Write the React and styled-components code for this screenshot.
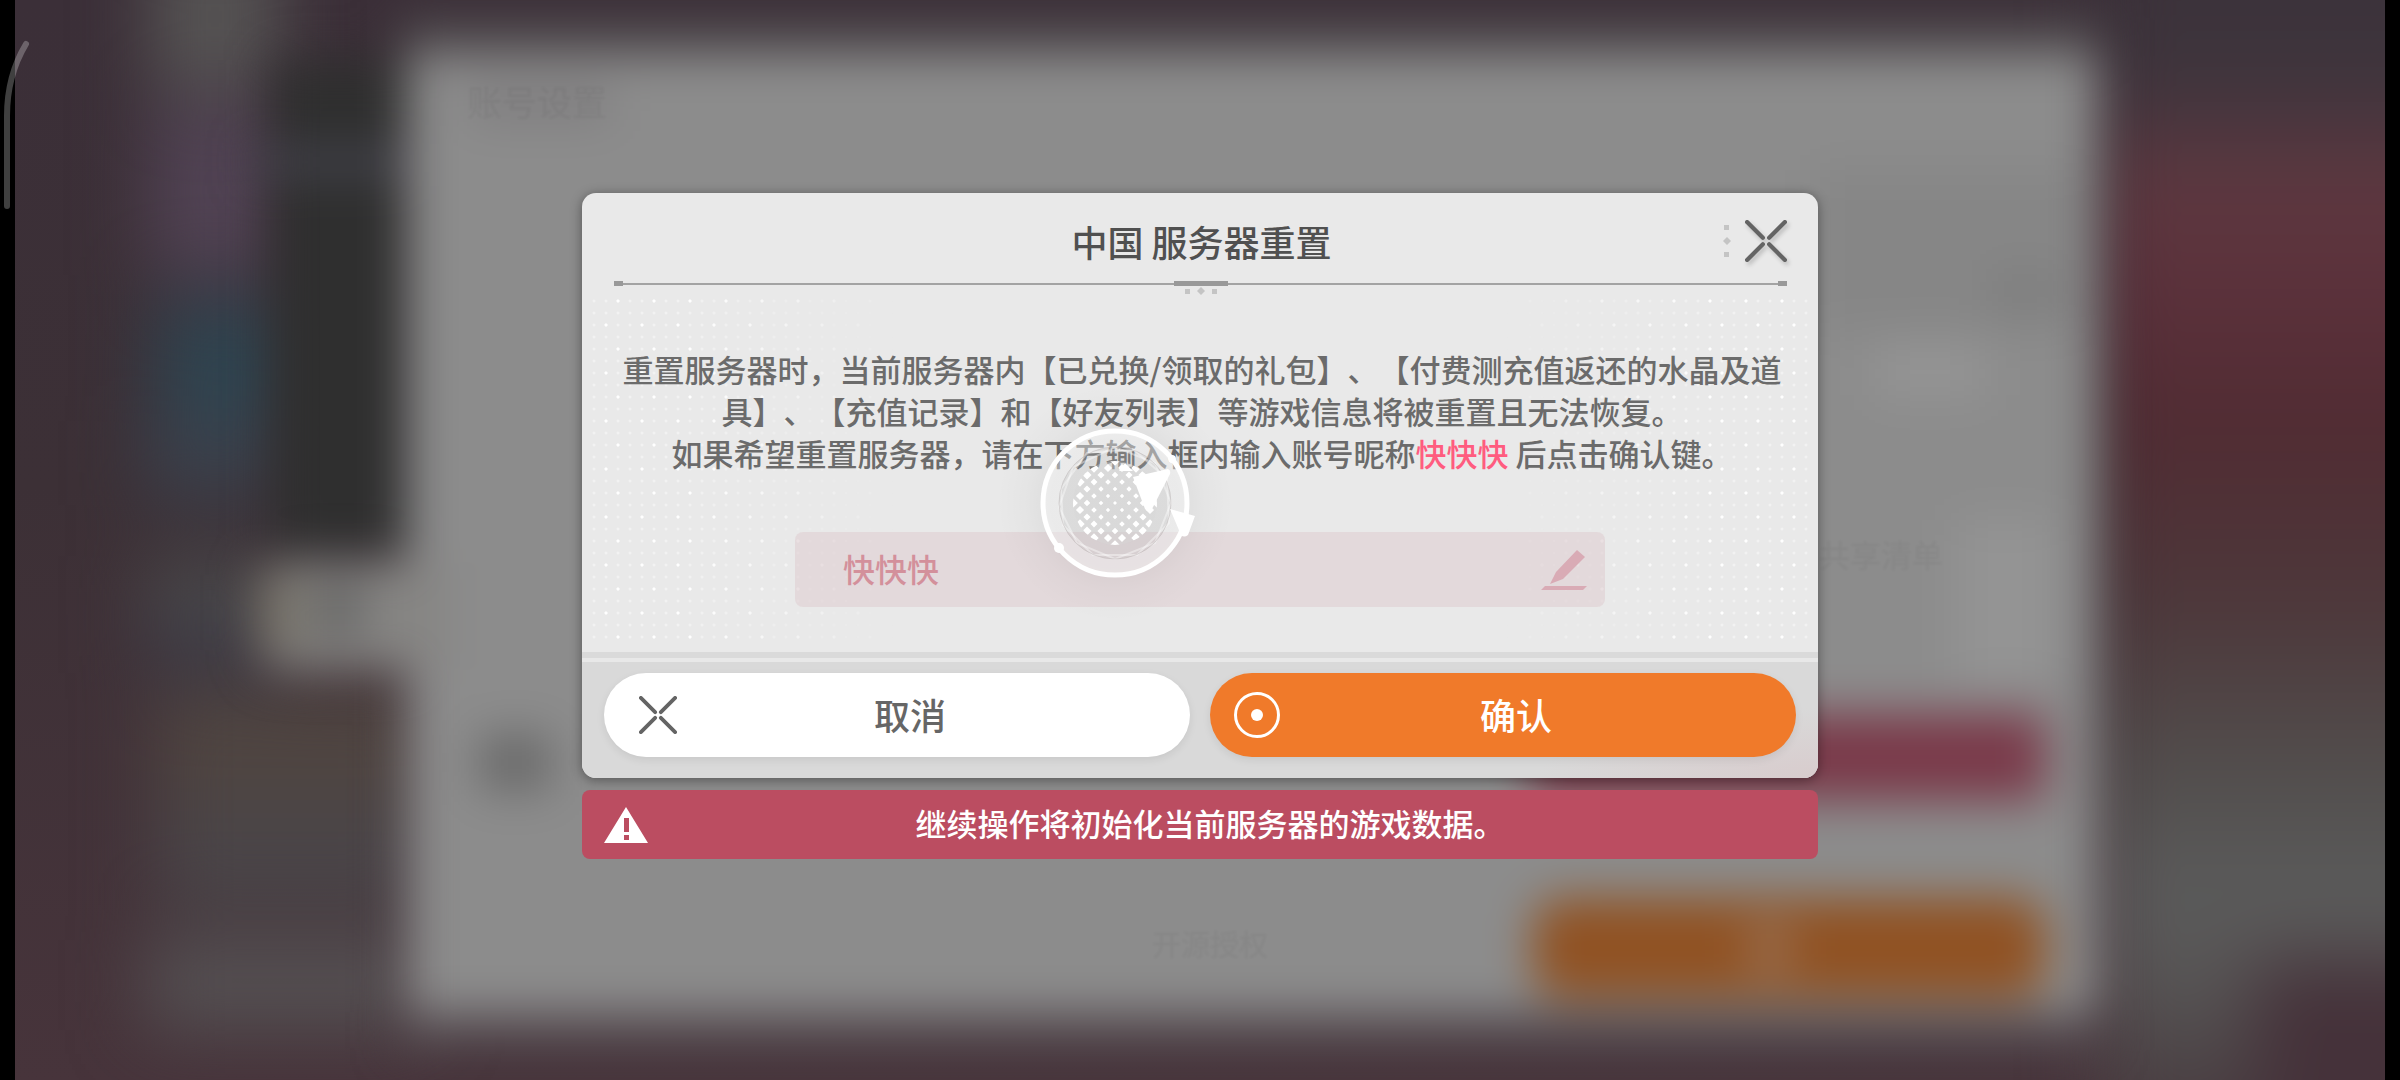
import React, { useState } from "react";
import styled, { createGlobalStyle } from "styled-components";

const GlobalStyle = createGlobalStyle`
  * {
    box-sizing: border-box;
  }

  body {
    margin: 0;
    background: #000;
    font-family: "Noto Sans CJK SC", sans-serif;
    text-spacing-trim: space-all;
  }
`;

const CrossIcon = ({ size, weight }) => (
  <svg width={size} height={size} viewBox="0 0 40 40" aria-hidden="true">
    <path
      d="M2 2 L17 17 M23 17 L38 2 M2 38 L17 23 M23 23 L38 38"
      fill="none"
      stroke="#646464"
      strokeWidth={weight}
      strokeLinecap="round"
    />
  </svg>
);

const TargetIcon = () => (
  <svg width="46" height="46" viewBox="0 0 46 46" aria-hidden="true">
    <circle cx="23" cy="23" r="21.5" fill="none" stroke="#fff" strokeWidth="3" />
    <circle cx="23" cy="23" r="6" fill="#fff" />
  </svg>
);

const PencilIcon = () => (
  <svg width="46" height="40" viewBox="0 0 46 40" aria-hidden="true">
    <path d="M36 0 L44 7 L22 29 L9 34 L15 22 Z" fill="#d9abb5" />
    <path d="M4 36 H46 L42 40 H0 Z" fill="#d9abb5" />
  </svg>
);

const WarningIcon = () => (
  <svg width="44" height="36" viewBox="0 0 44 36" aria-hidden="true">
    <path
      fillRule="evenodd"
      d="M22 0 L44 36 H0 Z M20 11 V25 H25 V11 Z M20 28 V33 H25 V28 Z"
      fill="#fff"
    />
  </svg>
);

// three little marks, used below the title and next to the close button
const Marks = ({ vertical }) => (
  <svg
    width={vertical ? 8 : 34}
    height={vertical ? 34 : 8}
    viewBox={vertical ? "0 0 8 34" : "0 0 34 8"}
    aria-hidden="true"
  >
    <g fill="#c4c4c4" transform={vertical ? "translate(8 0) rotate(90)" : undefined}>
      <rect x="1" y="2" width="5" height="5" />
      <path d="M17 0 L21 4 L17 8 L13 4 Z" />
      <rect x="28" y="2" width="5" height="5" />
    </g>
  </svg>
);

const Scene = () => (
  <SceneSvg viewBox="0 0 2370 1080" preserveAspectRatio="none" aria-hidden="true">
    <defs>
      <linearGradient id="base" x1="0" y1="0" x2="0" y2="1">
        <stop offset="0" stopColor="#3b2f38" />
        <stop offset="0.45" stopColor="#3c3036" />
        <stop offset="1" stopColor="#47343b" />
      </linearGradient>
      <linearGradient id="rightSide" x1="0" y1="0" x2="0" y2="1">
        <stop offset="0" stopColor="#3a3038" />
        <stop offset="0.14" stopColor="#3e353d" />
        <stop offset="0.22" stopColor="#5e3840" />
        <stop offset="0.31" stopColor="#5b313b" />
        <stop offset="0.41" stopColor="#512c33" />
        <stop offset="0.55" stopColor="#4d383b" />
        <stop offset="0.68" stopColor="#524e4d" />
        <stop offset="0.77" stopColor="#5b5b5b" />
        <stop offset="0.84" stopColor="#585656" />
        <stop offset="0.92" stopColor="#4b4245" />
        <stop offset="1" stopColor="#46343a" />
      </linearGradient>
      <filter
        id="soft"
        x="-50%"
        y="-50%"
        width="200%"
        height="200%"
        colorInterpolationFilters="sRGB"
      >
        <feGaussianBlur stdDeviation="23" />
      </filter>
      <filter
        id="wide"
        x="-50%"
        y="-50%"
        width="200%"
        height="200%"
        colorInterpolationFilters="sRGB"
      >
        <feGaussianBlur stdDeviation="36" />
      </filter>
      <filter id="faint" colorInterpolationFilters="sRGB">
        <feGaussianBlur stdDeviation="1" />
      </filter>
    </defs>
    <rect width="2370" height="1080" fill="url(#base)" />
    <g filter="url(#wide)">
      <rect x="2085" y="-100" width="420" height="1280" fill="url(#rightSide)" />
      <rect x="2240" y="960" width="240" height="220" fill="#45323a" />
      <rect x="135" y="-60" width="130" height="150" fill="#565454" />
      <rect x="135" y="105" width="130" height="170" fill="#514354" />
      <rect x="140" y="300" width="140" height="120" fill="#2f4450" />
      <rect x="130" y="420" width="140" height="80" fill="#3b414c" />
      <rect x="130" y="560" width="130" height="60" fill="#4a4b4c" />
      <rect x="130" y="625" width="130" height="50" fill="#3c3b47" />
      <rect x="140" y="690" width="270" height="110" fill="#4f4541" />
      <rect x="140" y="800" width="270" height="110" fill="#4a4548" />
      <rect x="130" y="940" width="280" height="90" fill="#555153" />
    </g>
    <g filter="url(#soft)">
      <rect x="258" y="60" width="132" height="490" fill="#2f2f2f" />
      <rect x="240" y="150" width="150" height="24" fill="#464650" />
      <rect x="385" y="18" width="1700" height="40" fill="#4d474b" />
      <rect x="385" y="1010" width="1700" height="40" fill="#544a4f" />
      <rect x="392" y="54" width="1691" height="960" rx="6" fill="#8c8c8c" />
      <rect x="250" y="562" width="180" height="108" rx="10" fill="#868583" />
      <rect x="240" y="575" width="50" height="75" fill="#77736a" />
      <rect x="305" y="585" width="40" height="50" fill="#606060" />
      <rect x="455" y="90" width="140" height="28" fill="#7b797b" />
      <rect x="465" y="735" width="70" height="55" fill="#686868" />
      <rect x="1800" y="170" width="265" height="160" fill="#868686" />
      <rect x="1980" y="275" width="60" height="35" fill="#7c7c7c" />
      <rect x="1860" y="345" width="110" height="50" fill="#959595" />
      <rect x="1940" y="520" width="100" height="160" fill="#949494" />
      <rect x="1515" y="714" width="515" height="86" rx="10" fill="#7a3a4a" />
      <rect x="1518" y="898" width="512" height="100" rx="30" fill="#905223" />
      <rect x="1735" y="925" width="40" height="46" fill="#9a7357" />
    </g>
    <g filter="url(#faint)" fill="#000" fillOpacity="0.04">
      <text x="452" y="116" fontSize="35">账号设置</text>
      <text x="1804" y="567" fontSize="31">共享清单</text>
      <text x="1137" y="956" fontSize="29">开源授权</text>
    </g>
  </SceneSvg>
);

// staggered diamonds that grow towards the rim of the disc
const meshPath = () => {
  const parts = [];
  for (let row = -6; row <= 6; row += 1) {
    for (let col = -6; col <= 6; col += 1) {
      const x = col * 7;
      const y = row * 7;
      const distance = Math.hypot(x, y);
      if ((row + col) % 2 === 0 && distance <= 43) {
        const r = 2 + (distance / 43) ** 2 * 3;
        parts.push(
          `M${120 + x} ${120 + y - r} l${r} ${r} l${-r} ${r} l${-r} ${-r} Z`
        );
      }
    }
  }
  return parts.join(" ");
};

const Spinner = () => (
  <SpinnerSvg viewBox="0 0 240 240" aria-hidden="true">
    <defs>
      <radialGradient id="halo">
        <stop offset="0.55" stopColor="#000" stopOpacity="0.05" />
        <stop offset="0.75" stopColor="#000" stopOpacity="0.02" />
        <stop offset="1" stopColor="#000" stopOpacity="0" />
      </radialGradient>
      <clipPath id="disc">
        <circle cx="120" cy="120" r="42" />
      </clipPath>
    </defs>
    <circle cx="120" cy="120" r="118" fill="url(#halo)" />
    <circle cx="120" cy="120" r="64" fill="none" stroke="#fff" strokeOpacity="0.4" strokeWidth="16" />
    <circle cx="120" cy="120" r="56" fill="#d8d8d8" fillOpacity="0.2" />
    <g fill="none" stroke="#fff" strokeOpacity="0.4" strokeWidth="2">
      <path d="M66 106 L92 70 L138 66 L172 96 L174 140 L142 172 L98 172 L68 142 Z" />
      <path d="M64 124 L78 84 L120 64 L160 80 L176 120 L160 160 L120 176 L82 160 Z" />
    </g>
    <circle cx="120" cy="120" r="56" fill="none" stroke="#bdb8b8" strokeOpacity="0.5" strokeWidth="1" />
    <circle cx="120" cy="120" r="42" fill="#d8d8d8" fillOpacity="0.35" />
    <path d={meshPath()} fill="#fff" clipPath="url(#disc)" />
    <circle cx="120" cy="120" r="72" fill="none" stroke="#fff" strokeWidth="5" />
    <circle cx="64" cy="165" r="5" fill="#fff" />
    <circle cx="177" cy="76" r="4" fill="#fff" />
    <path d="M124 88 L130 80 L138 88 Z" fill="#fff" />
    <path d="M138 94 L173 86 Q176 87 175 91 L157 126 Q153 130 150 126 Z" fill="#fff" />
    <path d="M175 126 L200 133 L193 152 Q189 155 186 152 Z" fill="#fff" />
  </SpinnerSvg>
);

export default function App() {
  const [nickname, setNickname] = useState("快快快");

  return (
    <>
      <GlobalStyle />
      <Screen>
        <Scene />
        <EdgeHandle viewBox="0 0 32 176" aria-hidden="true">
          <path
            d="M7 170 V80 C7 50 14 28 26 8"
            fill="none"
            stroke="#fff"
            strokeOpacity="0.25"
            strokeWidth="6"
            strokeLinecap="round"
          />
        </EdgeHandle>
        <Stack>
          <Dialog role="dialog" aria-labelledby="dialog-title">
            <Header>
              <Title id="dialog-title">中国 服务器重置</Title>
              <HeaderActions>
                <Marks vertical />
                <CloseButton type="button" aria-label="关闭">
                  <CrossIcon size={42} weight={4} />
                </CloseButton>
              </HeaderActions>
            </Header>
            <Rule>
              <RuleBar />
              <Marks />
            </Rule>
            <Body>
              <Message>
                重置服务器时，当前服务器内【已兑换/领取的礼包】、【付费测充值返还的水晶及道具】、【充值记录】和【好友列表】等游戏信息将被重置且无法恢复。
                <br />
                如果希望重置服务器，请在下方输入框内输入账号昵称<Name>快快快</Name> 后点击确认键。
              </Message>
              <Field>
                <Input
                  type="text"
                  aria-label="账号昵称"
                  value={nickname}
                  onChange={(e) => setNickname(e.target.value)}
                />
                <PencilIcon />
              </Field>
              <Spinner />
            </Body>
            <Footer>
              <Button type="button">
                <IconBox>
                  <CrossIcon size={38} weight={4} />
                </IconBox>
                <Label>取消</Label>
              </Button>
              <Button type="button" $primary>
                <IconBox>
                  <TargetIcon />
                </IconBox>
                <Label>确认</Label>
              </Button>
            </Footer>
          </Dialog>
          <Warning role="alert">
            <WarningIcon />
            <Label>继续操作将初始化当前服务器的游戏数据。</Label>
          </Warning>
        </Stack>
      </Screen>
    </>
  );
}

const Screen = styled.main`
  position: relative;
  display: flex;
  flex-direction: column;
  align-items: center;
  min-height: 100vh;
  padding: 193px 15px 0;
  overflow: hidden;
`;

const SceneSvg = styled.svg`
  position: absolute;
  top: 0;
  left: 15px;
  width: calc(100% - 30px);
  height: 100%;
`;

const EdgeHandle = styled.svg`
  position: absolute;
  top: 36px;
  left: 0;
  width: 32px;
  height: 176px;
`;

const Stack = styled.div`
  position: relative;
  display: flex;
  flex-direction: column;
  gap: 12px;
  width: 100%;
  max-width: 1236px;
`;

const Dialog = styled.section`
  border-radius: 14px;
  background: #e9e9e9;
  box-shadow: 0 2px 12px rgba(0, 0, 0, 0.4);
`;

const Header = styled.header`
  display: grid;
  grid-template-columns: 1fr auto 1fr;
  align-items: center;
  height: 88px;
  padding: 8px 31px 0 34px;
`;

const Title = styled.h1`
  grid-column: 2;
  margin: 0;
  color: #505050;
  font-size: 36px;
  font-weight: 500;
  line-height: 48px;
`;

const HeaderActions = styled.div`
  display: flex;
  justify-content: flex-end;
  align-items: center;
  gap: 14px;
`;

const CloseButton = styled.button`
  display: flex;
  padding: 0;
  border: none;
  background: transparent;
  cursor: pointer;
  filter: drop-shadow(2px 3px 2px rgba(0, 0, 0, 0.2));
`;

const Rule = styled.div`
  display: flex;
  flex-direction: column;
  align-items: center;
  gap: 1px;
  height: 17px;
  margin: 0 31px 0 32px;
  background:
    linear-gradient(#999, #999) 0 0 / 9px 5px no-repeat,
    linear-gradient(#999, #999) 100% 0 / 9px 5px no-repeat,
    linear-gradient(#a3a3a3, #a3a3a3) 0 2px / 100% 2px no-repeat;
`;

const RuleBar = styled.div`
  flex: none;
  width: 54px;
  height: 5px;
  background: #999;
`;

const dot = (alpha) =>
  `radial-gradient(circle at 6px 6px, rgba(255, 255, 255, ${alpha}) 1px, transparent 2px)`;

const Body = styled.div`
  position: relative;
  display: flex;
  flex-direction: column;
  align-items: center;
  height: 354px;
  padding: 50px 32px 0;

  &::before,
  &::after {
    content: "";
    position: absolute;
    top: -3px;
    left: 6px;
    width: 312px;
    height: 348px;
    background:
      ${dot(1)} 24px 0 / 36px 48px,
      ${dot(1)} 12px 24px / 36px 48px,
      ${dot(0.4)} 0 0 / 12px 12px;
    mask-image: linear-gradient(90deg, #000 30%, transparent);
  }

  &::after {
    left: auto;
    right: 6px;
    transform: scaleX(-1);
  }
`;

const Message = styled.p`
  z-index: 1;
  margin: 0;
  padding-left: 4px;
  color: #6b6b6b;
  font-size: 31px;
  font-weight: 500;
  line-height: 42px;
  text-align: center;
`;

const Name = styled.strong`
  color: #ff5c7f;
  font-weight: 500;
`;

const Field = styled.label`
  z-index: 1;
  display: flex;
  align-items: center;
  width: 100%;
  max-width: 810px;
  height: 75px;
  margin-top: 58px;
  padding: 0 18px 0 48px;
  border-radius: 8px;
  background: rgba(219, 190, 195, 0.35);
`;

const Input = styled.input`
  flex: 1;
  min-width: 0;
  padding: 0 0 4px;
  border: none;
  outline: none;
  background: transparent;
  color: #d3909b;
  font-family: inherit;
  font-size: 32px;
  font-weight: 500;
`;

const SpinnerSvg = styled.svg`
  position: absolute;
  z-index: 2;
  top: 85px;
  left: 413px;
  width: 240px;
  height: 240px;
  pointer-events: none;
`;

const Footer = styled.footer`
  display: grid;
  grid-template-columns: 1fr 1fr;
  gap: 20px;
  padding: 15px 22px 21px;
  border-top: 6px solid #dadada;
  border-radius: 0 0 14px 14px;
  background:
    linear-gradient(#e8e8e8, #e8e8e8) 0 0 / 100% 4px no-repeat,
    radial-gradient(280px 70px at 100% 100%, #d8cccd, rgba(217, 217, 217, 0)),
    #d9d9d9;
`;

const Button = styled.button`
  display: flex;
  align-items: center;
  height: 84px;
  padding: ${({ $primary }) => ($primary ? "0 44px 0 24px" : "0 51px 0 31px")};
  border: none;
  border-radius: 42px;
  background: ${({ $primary }) => ($primary ? "#f07a2a" : "#fff")};
  box-shadow: 0 3px 8px rgba(0, 0, 0, 0.08);
  color: ${({ $primary }) => ($primary ? "#fff" : "#666")};
  font-family: inherit;
  font-size: 36px;
  font-weight: 500;
  cursor: pointer;
`;

const IconBox = styled.span`
  display: flex;
  justify-content: center;
  width: 46px;
`;

const Label = styled.span`
  flex: 1;
  padding-bottom: 3px;
  line-height: 48px;
  text-align: center;
`;

const Warning = styled.div`
  display: flex;
  align-items: center;
  height: 69px;
  padding: 0 46px 0 22px;
  border-radius: 8px;
  background: #bb4d61;
  color: #fff;
  font-size: 31px;
  font-weight: 500;
`;
